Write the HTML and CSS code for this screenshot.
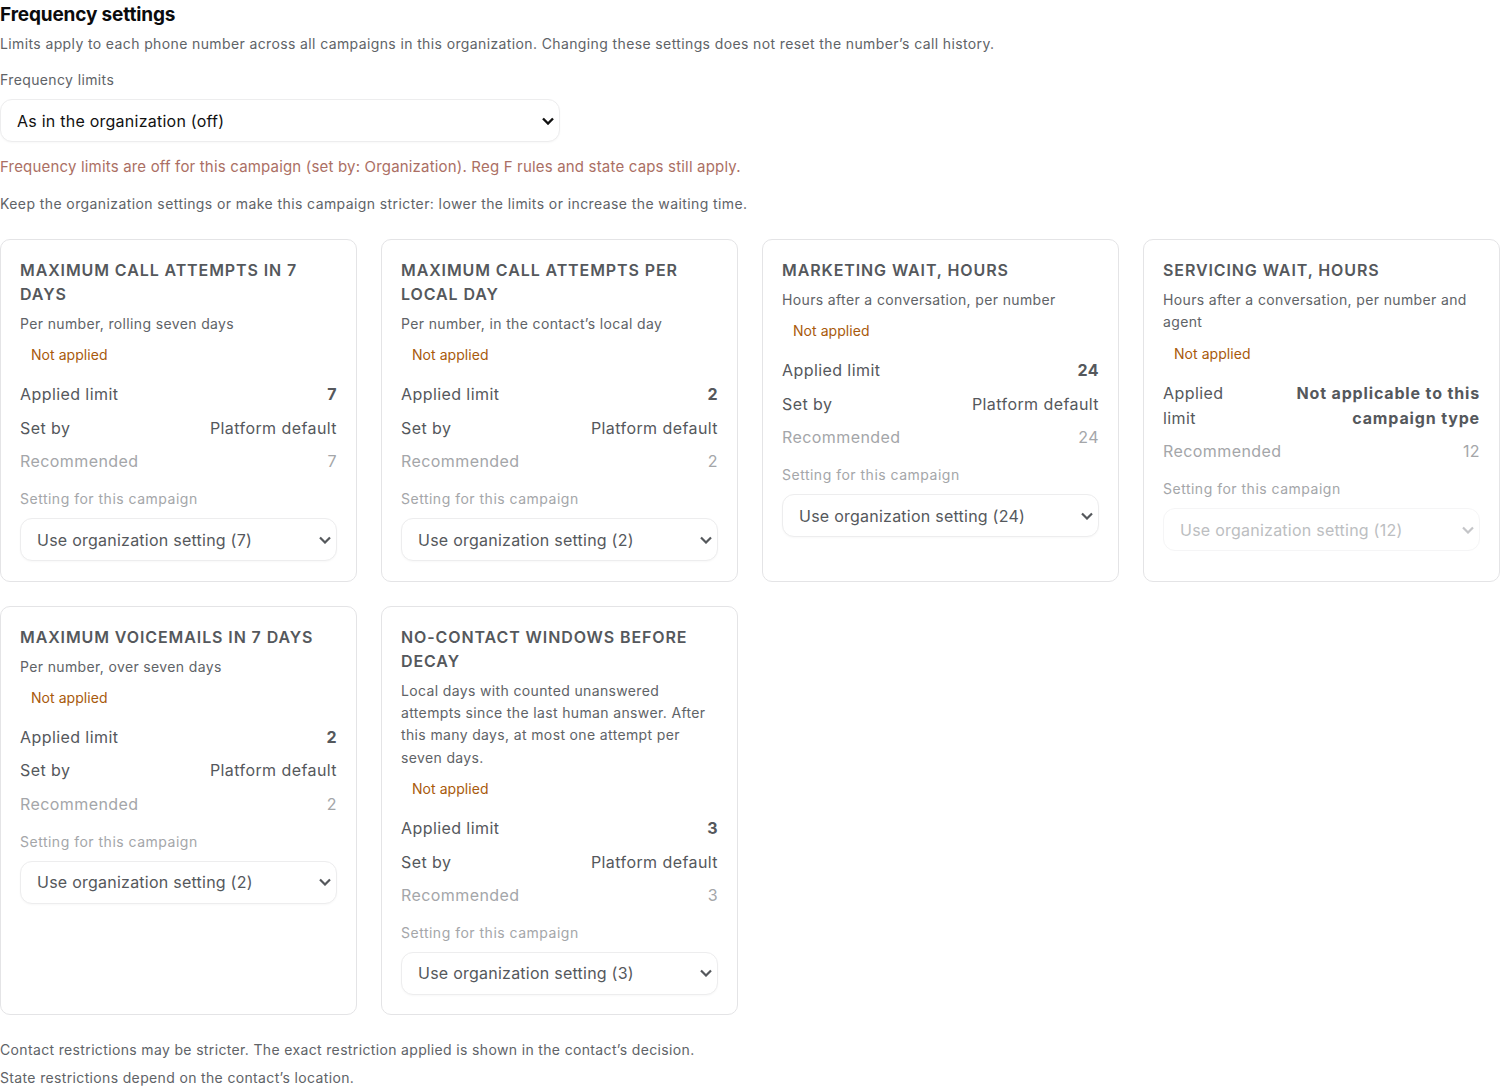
FILE: index.html
```html
<!DOCTYPE html>
<html lang="en">
<head>
<meta charset="utf-8">
<title>Frequency settings</title>
<link rel="stylesheet" href="styles.css">
</head>
<body>
<h2 class="title">Frequency settings</h2>
<p class="hint desc">Limits apply to each phone number across all campaigns in this organization. Changing these settings does not reset the number’s call history.</p>
<label class="hint top-label" for="limits">Frequency limits</label>
<select class="select main-select" id="limits"><option>As in the organization (off)</option></select>
<p class="warn">Frequency limits are off for this campaign (set by: Organization). Reg F rules and state caps still apply.</p>
<p class="hint keep">Keep the organization settings or make this campaign stricter: lower the limits or increase the waiting time.</p>

<div class="grid">
	<div class="card">
		<h3>Maximum call attempts in 7 days</h3>
		<p class="sub">Per number, rolling seven days</p>
		<span class="badge">Not applied</span>
		<div class="row"><span>Applied limit</span><b>7</b></div>
		<div class="row"><span>Set by</span><span>Platform default</span></div>
		<div class="row muted"><span>Recommended</span><span>7</span></div>
		<div class="field-label">Setting for this campaign</div>
		<select class="select"><option>Use organization setting (7)</option></select>
	</div>
	<div class="card">
		<h3>Maximum call attempts per local day</h3>
		<p class="sub">Per number, in the contact’s local day</p>
		<span class="badge">Not applied</span>
		<div class="row"><span>Applied limit</span><b>2</b></div>
		<div class="row"><span>Set by</span><span>Platform default</span></div>
		<div class="row muted"><span>Recommended</span><span>2</span></div>
		<div class="field-label">Setting for this campaign</div>
		<select class="select"><option>Use organization setting (2)</option></select>
	</div>
	<div class="card">
		<h3>Marketing wait, hours</h3>
		<p class="sub">Hours after a conversation, per number</p>
		<span class="badge">Not applied</span>
		<div class="row"><span>Applied limit</span><b>24</b></div>
		<div class="row"><span>Set by</span><span>Platform default</span></div>
		<div class="row muted"><span>Recommended</span><span>24</span></div>
		<div class="field-label">Setting for this campaign</div>
		<select class="select"><option>Use organization setting (24)</option></select>
	</div>
	<div class="card">
		<h3>Servicing wait, hours</h3>
		<p class="sub">Hours after a conversation, per number and agent</p>
		<span class="badge">Not applied</span>
		<div class="row"><span>Applied limit</span><b class="na">Not applicable to this campaign type</b></div>
		<div class="row muted"><span>Recommended</span><span>12</span></div>
		<div class="field-label">Setting for this campaign</div>
		<select class="select" disabled><option>Use organization setting (12)</option></select>
	</div>
	<div class="card">
		<h3>Maximum voicemails in 7 days</h3>
		<p class="sub">Per number, over seven days</p>
		<span class="badge">Not applied</span>
		<div class="row"><span>Applied limit</span><b>2</b></div>
		<div class="row"><span>Set by</span><span>Platform default</span></div>
		<div class="row muted"><span>Recommended</span><span>2</span></div>
		<div class="field-label">Setting for this campaign</div>
		<select class="select"><option>Use organization setting (2)</option></select>
	</div>
	<div class="card">
		<h3>No-contact windows before decay</h3>
		<p class="sub">Local days with counted unanswered attempts since the last human answer. After this many days, at most one attempt per seven days.</p>
		<span class="badge">Not applied</span>
		<div class="row"><span>Applied limit</span><b>3</b></div>
		<div class="row"><span>Set by</span><span>Platform default</span></div>
		<div class="row muted"><span>Recommended</span><span>3</span></div>
		<div class="field-label">Setting for this campaign</div>
		<select class="select"><option>Use organization setting (3)</option></select>
	</div>
</div>

<p class="hint foot">Contact restrictions may be stricter. The exact restriction applied is shown in the contact’s decision.</p>
<p class="hint foot">State restrictions depend on the contact’s location.</p>
</body>
</html>
```

FILE: styles.css
```css
*{ box-sizing:border-box; margin:0; padding:0;}
body{ font-family:Inter,"Liberation Sans",sans-serif; font-size:14px; line-height:22px; color:#55585c; background:#fff; overflow:hidden;}
.title{ font-size:19px; line-height:24px; padding-top:3px; font-weight:700; letter-spacing:-.15px; color:#0b0b0d;}
.hint{ font-size:14px; line-height:22px; letter-spacing:.38px; color:#606367;}
.desc{ margin-top:6px;}
.top-label{ display:block; margin-top:14px;}
.select{ display:block; width:100%; height:43px; padding:0 12px 0 16px; font-family:inherit; font-size:16px; letter-spacing:.24px; color:#55585c; border:1px solid #ededee; border-radius:12px; box-shadow:0 1px 2px rgba(0,0,0,.03); appearance:none; -webkit-appearance:none;
	background:#fff url("data:image/svg+xml,%3Csvg xmlns='http://www.w3.org/2000/svg' width='12' height='8'%3E%3Cpath d='M1 1.5l5 5 5-5' fill='none' stroke='%2355585c' stroke-width='2.2'/%3E%3C/svg%3E") no-repeat right 5px center;}
.select:disabled{ color:#bcbec1; border-color:#f5f5f6; opacity:1; box-shadow:none;
	background-image:url("data:image/svg+xml,%3Csvg xmlns='http://www.w3.org/2000/svg' width='12' height='8'%3E%3Cpath d='M1 1.5l5 5 5-5' fill='none' stroke='%23c4c5c8' stroke-width='2.2'/%3E%3C/svg%3E");}
.main-select{ width:560px; margin-top:8px; color:#111; background-image:url("data:image/svg+xml,%3Csvg xmlns='http://www.w3.org/2000/svg' width='12' height='8'%3E%3Cpath d='M1 1.5l5 5 5-5' fill='none' stroke='%23111' stroke-width='2.4'/%3E%3C/svg%3E"); background-position:right 5px center;}
.warn{ margin-top:14px; font-size:15px; letter-spacing:.18px; color:#ab6f64;}
.keep{ margin-top:15px; letter-spacing:.41px;}
.grid{ display:grid; grid-template-columns:repeat(4,1fr); gap:24px; margin-top:24px;}
.card{ padding:18px 19px 19.4px; border:1px solid #e4e4e6; border-radius:10px; background:#fff;}
.card h3{ font-size:16px; line-height:24px; font-weight:600; letter-spacing:.9px; text-transform:uppercase; color:#55585c;}
.sub{ margin-top:7px; line-height:22.4px; letter-spacing:.36px; color:#606367;}
.badge{ display:block; margin:9px 0 0 11px; letter-spacing:.05px; color:#a85a0c;}
.row{ display:flex; justify-content:space-between; gap:24px; margin-top:8.4px; font-size:16px; line-height:25px; letter-spacing:.42px;}
.row b{ font-weight:700; text-align:right;}
.row .na{ letter-spacing:.85px;}
.badge + .row{ margin-top:16px;}
.muted{ color:#a4a6a9;}
.field-label{ margin-top:14px; letter-spacing:.5px; color:#a4a6a9;}
.card .select{ margin-top:8px;}
.foot{ margin-top:6px; letter-spacing:.35px;}
.grid + .foot{ margin-top:24px;}
```
